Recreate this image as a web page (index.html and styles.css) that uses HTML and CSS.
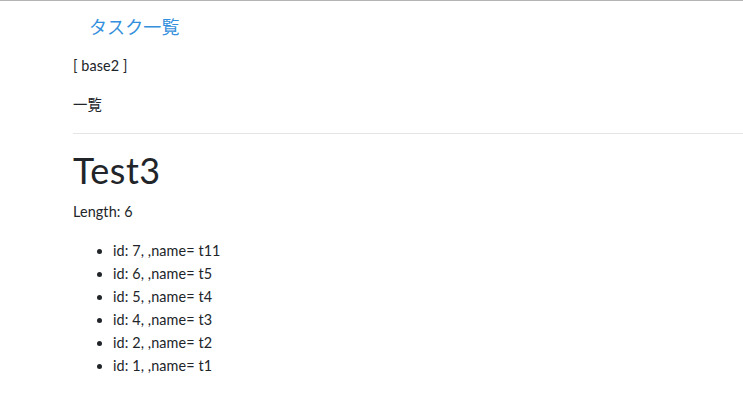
FILE: index.html
```html
<!DOCTYPE html>
<html lang="ja">
<head>
<meta charset="utf-8">
<title>タスク一覧</title>
<link rel="stylesheet" href="styles.css">
</head>
<body>
<div class="container">
  <nav class="nav">
    <a class="brand" href="#">タスク一覧</a>
  </nav>
  <p class="text">[ base2 ]</p>
  <p class="text">一覧</p>
  <hr class="rule">
  <h1 class="title">Test3</h1>
  <p class="text">Length: 6</p>
  <ul class="list">
    <li>id: 7, ,name= t11</li>
    <li>id: 6, ,name= t5</li>
    <li>id: 5, ,name= t4</li>
    <li>id: 4, ,name= t3</li>
    <li>id: 2, ,name= t2</li>
    <li>id: 1, ,name= t1</li>
  </ul>
</div>
</body>
</html>
```

FILE: styles.css
```css
html, body {
  margin: 0;
  padding: 0;
}
body {
  border-top: 1px solid #b4b4b4;
  background: #fff;
  color: #212529;
  font-family: "Lato", "Noto Sans CJK JP", sans-serif;
  font-size: 14.4px;
  line-height: 1.6;
  letter-spacing: 0.1px;
}
.container {
  padding-left: 73px;
}
.nav {
  padding: 12px 0 0 16px;
  margin-bottom: 12px;
}
.brand {
  color: #3490dc;
  text-decoration: none;
  font-size: 18px;
}
.text {
  margin: 0 0 16px;
}
.rule {
  border: 0;
  border-top: 1px solid rgba(0,0,0,0.1);
  margin: 17px 0 15px;
}
.title {
  font-size: 36px;
  font-weight: 400;
  line-height: 1.2;
  margin: 0 0 8px;
  letter-spacing: 0.5px;
}
.list {
  margin: 0 0 16px;
  padding-left: 40px;
}
```
